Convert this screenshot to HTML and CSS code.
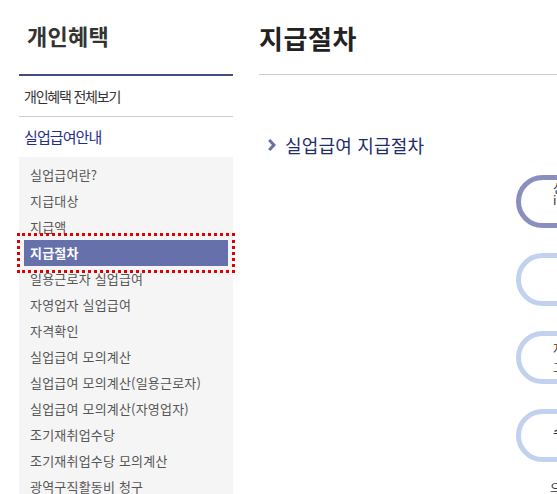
FILE: index.html
```html
<!DOCTYPE html>
<html lang="ko">
<head>
<meta charset="utf-8">
<title>지급절차</title>
<link rel="stylesheet" href="styles.css">
</head>
<body>
<div class="wrap">
  <aside class="side">
    <h2 class="side-title">개인혜택</h2>
    <a class="all-link" href="#">개인혜택 전체보기</a>
    <a class="section" href="#">실업급여안내</a>
    <ul class="sub">
      <li><a href="#">실업급여란?</a></li>
      <li><a href="#">지급대상</a></li>
      <li><a href="#">지급액</a></li>
      <li><a class="on" href="#">지급절차</a></li>
      <li><a href="#">일용근로자 실업급여</a></li>
      <li><a href="#">자영업자 실업급여</a></li>
      <li><a href="#">자격확인</a></li>
      <li><a href="#">실업급여 모의계산</a></li>
      <li><a href="#">실업급여 모의계산(일용근로자)</a></li>
      <li><a href="#">실업급여 모의계산(자영업자)</a></li>
      <li><a href="#">조기재취업수당</a></li>
      <li><a href="#">조기재취업수당 모의계산</a></li>
      <li><a href="#">광역구직활동비 청구</a></li>
    </ul>
  </aside>
  <main class="main">
    <h1 class="page-title">지급절차</h1>
    <h3 class="sub-title">
      <svg class="chev" width="8" height="12" viewBox="0 0 8 12"><path d="M1.2 1 L6 6 L1.2 11" fill="none" stroke="#6670ab" stroke-width="3"/></svg>
      <span>실업급여 지급절차</span>
    </h3>
    <ol class="steps">
      <li class="cap cap-dark cap-top"><span>신청서 작성</span><span>i</span></li>
      <li class="cap"><span>&nbsp;</span></li>
      <li class="cap"><span>자격 신청</span><span>고용센터 방문</span></li>
      <li class="cap cap-up"><span>수급자격 인정</span></li>
    </ol>
    <p class="after">으</p>
  </main>
</div>
</body>
</html>
```
FILE: styles.css
```css
html, body {
  margin: 0;
  padding: 0;
  background: #fff;
  overflow: hidden;
}
body {
  font-family: "Noto Sans CJK KR", "Noto Sans", sans-serif;
  width: 557px;
  height: 494px;
}
a { text-decoration: none; }
ul, ol { list-style: none; margin: 0; padding: 0; }

.wrap {
  display: flex;
  padding-left: 19px;
  width: 900px;
}

.side {
  width: 214px;
  flex: none;
}
.side-title {
  margin: 0;
  height: 76px;
  box-sizing: border-box;
  padding: 21px 0 0 8px;
  font-size: 22px;
  line-height: 28px;
  font-weight: 700;
  letter-spacing: 0.3px;
  color: #333;
  border-bottom: 2px solid #434d7d;
}
.all-link {
  display: block;
  height: 41px;
  box-sizing: border-box;
  line-height: 40px;
  padding-left: 5px;
  font-size: 14px;
  letter-spacing: -1.2px;
  color: #333;
  border-bottom: 1px solid #cccccc;
}
.section {
  display: block;
  height: 40px;
  line-height: 40px;
  padding-left: 5px;
  font-size: 15px;
  letter-spacing: -0.9px;
  color: #1f2e8a;
}
.sub {
  background: #f5f5f5;
  padding: 5px 5px 20px;
}
.sub a {
  display: block;
  height: 26px;
  line-height: 26px;
  padding-left: 6px;
  font-size: 13px;
  letter-spacing: 0.2px;
  color: #555;
}
.sub a.on {
  background: #6670ab;
  color: #fff;
  font-weight: 700;
  outline: 3px dotted #e00000;
  outline-offset: 4px;
}

.main {
  margin-left: 26px;
  flex: 1;
}
.page-title {
  margin: 0;
  height: 75px;
  box-sizing: border-box;
  padding-top: 22px;
  font-size: 26px;
  line-height: 32px;
  font-weight: 700;
  letter-spacing: 0.6px;
  color: #222;
  border-bottom: 1px solid #cccccc;
}
.sub-title {
  margin: 58px 0 0 9px;
  display: flex;
  align-items: center;
  gap: 9px;
  height: 24px;
  font-size: 18px;
  line-height: 24px;
  font-weight: 400;
  letter-spacing: 0.2px;
  color: #1f2d6b;
}
.chev { display: block; }

.steps {
  margin: 18px 0 0 257px;
  display: flex;
  flex-direction: column;
  gap: 25px;
}
.cap {
  width: 300px;
  height: 53px;
  box-sizing: border-box;
  border: 5px solid #c1d1ee;
  border-radius: 27px;
  display: flex;
  flex-direction: column;
  justify-content: center;
  padding-left: 32px;
  font-size: 12.5px;
  line-height: 19px;
  color: #333;
}
.cap-dark { border-color: #8a8fbd; }
.cap-top {
  justify-content: flex-start;
  padding-top: 2px;
  line-height: 12px;
}
.cap-up { padding-bottom: 8px; }

.after {
  margin: 18px 0 0 291px;
  font-size: 12.5px;
  line-height: 16px;
  color: #333;
}
```
